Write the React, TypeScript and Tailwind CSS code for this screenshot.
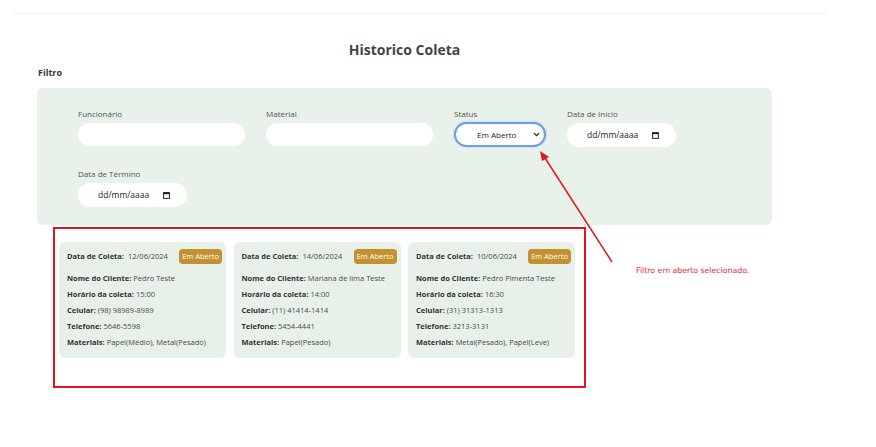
import { ChevronDown } from "lucide-react";

const coletas = [
  {
    data: "12/06/2024",
    cliente: "Pedro Teste",
    horario: "15:00",
    celular: "(98) 98989-8989",
    telefone: "5646-5598",
    materiais: "Papel(Médio), Metal(Pesado)",
  },
  {
    data: "14/06/2024",
    cliente: "Mariana de lima Teste",
    horario: "14:00",
    celular: "(11) 41414-1414",
    telefone: "5454-4441",
    materiais: "Papel(Pesado)",
  },
  {
    data: "10/06/2024",
    cliente: "Pedro Pimenta Teste",
    horario: "16:30",
    celular: "(31) 31313-1313",
    telefone: "3213-3131",
    materiais: "Metal(Pesado), Papel(Leve)",
  },
];

function CalendarIcon() {
  return (
    <svg width="7" height="7" viewBox="0 0 7 7" className="shrink-0">
      <rect x="0.6" y="0.6" width="5.8" height="5.8" fill="none" stroke="#222" strokeWidth="1" />
      <rect x="0.6" y="0.6" width="5.8" height="1.6" fill="#222" />
    </svg>
  );
}

function DateField({ label }: { label: string }) {
  return (
    <div className="flex flex-col w-[109px]">
      <label className="text-[8px] leading-[11px] text-[#555] mb-[4px]">{label}</label>
      <div className="h-[24px] rounded-full bg-white flex items-center pl-[20px] gap-[14px]">
        <span className="text-[8.5px] text-[#222]">dd/mm/aaaa</span>
        <CalendarIcon />
      </div>
    </div>
  );
}

function TextField({ label }: { label: string }) {
  return (
    <div className="flex flex-col w-[167px]">
      <label className="text-[8px] leading-[11px] text-[#555] mb-[4px]">{label}</label>
      <div className="h-[23px] rounded-full bg-white" />
    </div>
  );
}

function Row({ k, v }: { k: string; v: string }) {
  return (
    <div className="text-[7.5px] leading-[16px] whitespace-nowrap">
      <span className="font-bold text-[#333]">{k}</span> <span className="text-[#4a4a4a]">{v}</span>
    </div>
  );
}

export default function App() {
  return (
    <div
      className="relative w-[876px] h-[447px] overflow-hidden bg-white pt-[13px]"
      style={{ fontFamily: '"Open Sans", "Noto Sans", sans-serif' }}
    >
      <div className="ml-[13px] w-[814px] h-px bg-[#eef1ef]" />

      <div className="ml-[37px] w-[735px]">
        <h1 className="mt-[26px] text-center text-[14px] leading-[20px] font-bold text-[#444]">
          Historico Coleta
        </h1>
        <div className="mt-[7px] pl-px text-[9px] leading-[12px] font-bold text-[#333]">Filtro</div>

        <div className="mt-[9px] h-[137px] rounded-md bg-[#e8f1ea] pt-[20px] pl-[41px] pr-[41px]">
          <div className="flex flex-wrap gap-x-[21px] gap-y-[21px]">
            <TextField label="Funcionário" />
            <TextField label="Material" />
            <div className="flex flex-col w-[92px]">
              <label className="text-[8px] leading-[11px] text-[#555] mb-[3px]">Status</label>
              <div className="h-[25px] rounded-full bg-white border-2 border-[#6c9ee0] shadow-[0_0_2px_#9cc0f0] flex items-center pl-[21px] pr-[3px]">
                <span className="text-[8px] text-[#222] flex-1">Em Aberto</span>
                <ChevronDown size={9} strokeWidth={3.5} color="#222" />
              </div>
            </div>
            <DateField label="Data de Início" />
            <DateField label="Data de Término" />
          </div>
        </div>

        <div className="mt-[2px] ml-[16px] w-[533px] h-[161px] border-2 border-[#e0161c] pt-[13px] pl-[4px]">
          <div className="flex gap-[7.5px]">
            {coletas.map((c) => (
              <div key={c.data} className="w-[167px] h-[116px] rounded-md bg-[#e8f0ea] pt-[7px] pl-[8px] pr-[4px]">
                <div className="flex items-center justify-between h-[15px]">
                  <div className="text-[7.5px] whitespace-nowrap">
                    <span className="font-bold text-[#333]">Data de Coleta:</span>
                    <span className="text-[#4a4a4a] ml-[4px]">{c.data}</span>
                  </div>
                  <span className="h-[15px] px-[3px] flex items-center rounded-sm bg-[#c4912f] text-white text-[7.5px]">
                    Em Aberto
                  </span>
                </div>
                <div className="mt-[6px] flex flex-col">
                  <Row k="Nome do Cliente:" v={c.cliente} />
                  <Row k="Horário da coleta:" v={c.horario} />
                  <Row k="Celular:" v={c.celular} />
                  <Row k="Telefone:" v={c.telefone} />
                  <Row k="Materiais:" v={c.materiais} />
                </div>
              </div>
            ))}
          </div>
        </div>
      </div>

      <svg className="absolute inset-0 pointer-events-none" width="876" height="447">
        <line x1="612" y1="262" x2="545" y2="158" stroke="#e0161c" strokeWidth="1.5" />
        <polygon points="540,151 549,157 542,161" fill="#e0161c" />
      </svg>
      <div
        className="absolute left-[636px] top-[265px] text-[7.8px] leading-[12px] text-[#e0283a] whitespace-nowrap"
        style={{ fontFamily: '"DejaVu Sans", Verdana, sans-serif' }}
      >
        Filtro em aberto selecionado.
      </div>
    </div>
  );
}
